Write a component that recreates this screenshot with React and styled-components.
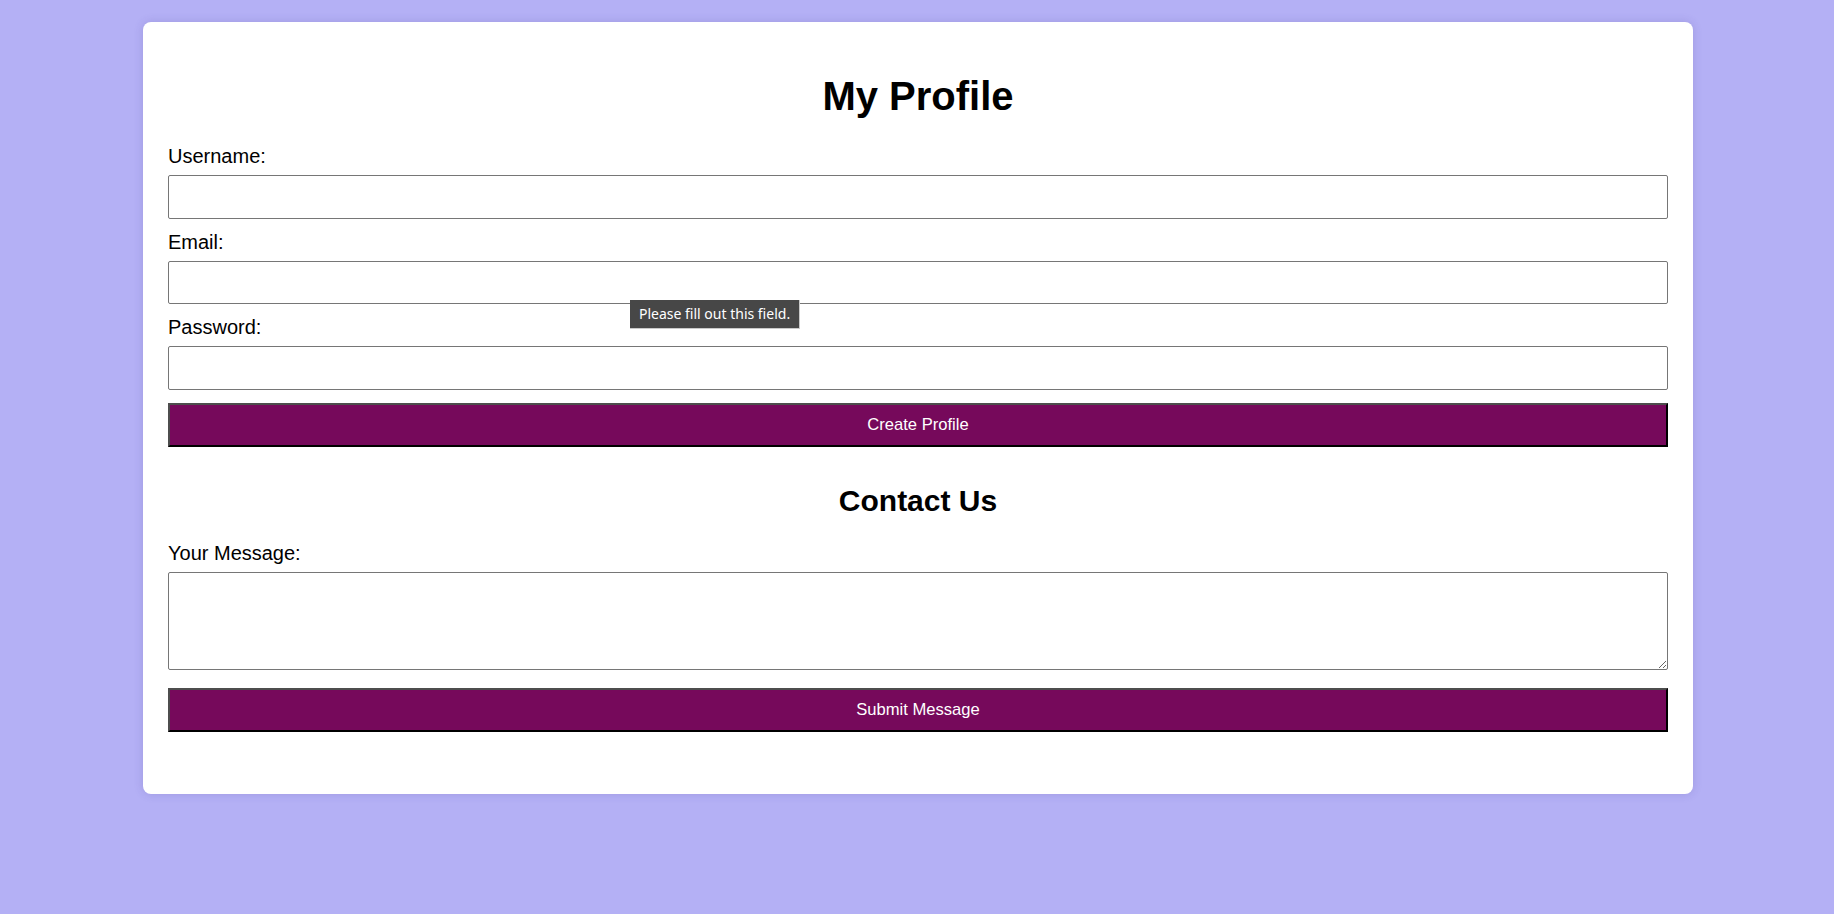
import React from 'react'
import styled, {createGlobalStyle} from 'styled-components'

const GlobalStyle = createGlobalStyle`
  html, body {
    margin: 0;
    padding: 0;
    background: #b4b0f5;
    font-family: 'Liberation Sans', Arial, sans-serif;
    color: #000;
  }
  #root {
    min-height: 914px;
    padding: 22px 0 0 2px;
    box-sizing: border-box;
  }
`

const Card = styled.main`
  box-sizing: border-box;
  max-width: 1550px;
  margin: 0 auto;
  padding: 25px 25px 62px;
  background: #fff;
  border-radius: 8px;
  box-shadow: 0 0 10px rgba(60, 50, 140, 0.18);
`

const Title = styled.h1`
  margin: 26px 0 26px;
  font-size: 40px;
  line-height: 46px;
  font-weight: 700;
  text-align: center;
`

const SubTitle = styled.h2`
  margin: 37px 0 24px;
  font-size: 30px;
  line-height: 34.5px;
  font-weight: 700;
  text-align: center;
`

const Form = styled.form`
  display: flex;
  flex-direction: column;
`

const Label = styled.label`
  display: block;
  font-size: 20px;
  line-height: 23px;
  margin-bottom: 7px;
`

const Field = styled.div`
  position: relative;
  margin-bottom: ${p => p.$gap || 12}px;
`

const Input = styled.input`
  display: block;
  box-sizing: border-box;
  width: 100%;
  height: 43.5px;
  margin: 0;
  padding: 0 10px;
  border: 1px solid #767676;
  border-radius: 2px;
  font-size: 16px;
  font-family: inherit;
  background: #fff;
`

const TextArea = styled.textarea`
  display: block;
  box-sizing: border-box;
  width: 100%;
  height: 97.5px;
  margin: 0;
  padding: 10px;
  border: 1px solid #767676;
  border-radius: 2px;
  font-size: 16px;
  font-family: inherit;
`

const Button = styled.button`
  display: block;
  width: 100%;
  height: 44px;
  margin-top: ${p => p.$top || 0}px;
  padding: 0;
  background: #76095b;
  color: #fff;
  font-family: 'Liberation Sans', Arial, sans-serif;
  font-size: 16.6px;
  border: 2px solid;
  border-color: #4d4d4d #000 #000 #4d4d4d;
  cursor: pointer;
`

const Bubble = styled.div`
  position: absolute;
  top: 39px;
  left: 462px;
  z-index: 2;
  box-sizing: border-box;
  height: 29px;
  padding: 0 9px;
  display: flex;
  align-items: center;
  background: #474747;
  color: #fff;
  font-family: 'Noto Sans', 'Open Sans', sans-serif;
  font-size: 14px;
  white-space: nowrap;
  border-right: 1px solid #c9c9c9;
  border-bottom: 1px solid #c9c9c9;
`

export default function App() {
  return (
    <>
      <GlobalStyle />
      <Card>
        <Title>My Profile</Title>
        <Form onSubmit={e => e.preventDefault()}>
          <Label htmlFor="username">Username:</Label>
          <Field>
            <Input id="username" type="text" />
          </Field>
          <Label htmlFor="email">Email:</Label>
          <Field>
            <Input id="email" type="email" />
            <Bubble>Please fill out this field.</Bubble>
          </Field>
          <Label htmlFor="password">Password:</Label>
          <Field>
            <Input id="password" type="password" />
          </Field>
          <Button type="submit" $top={1}>Create Profile</Button>
        </Form>

        <SubTitle>Contact Us</SubTitle>
        <Form onSubmit={e => e.preventDefault()}>
          <Label htmlFor="message">Your Message:</Label>
          <Field $gap={18}>
            <TextArea id="message" />
          </Field>
          <Button type="submit">Submit Message</Button>
        </Form>
      </Card>
    </>
  )
}
